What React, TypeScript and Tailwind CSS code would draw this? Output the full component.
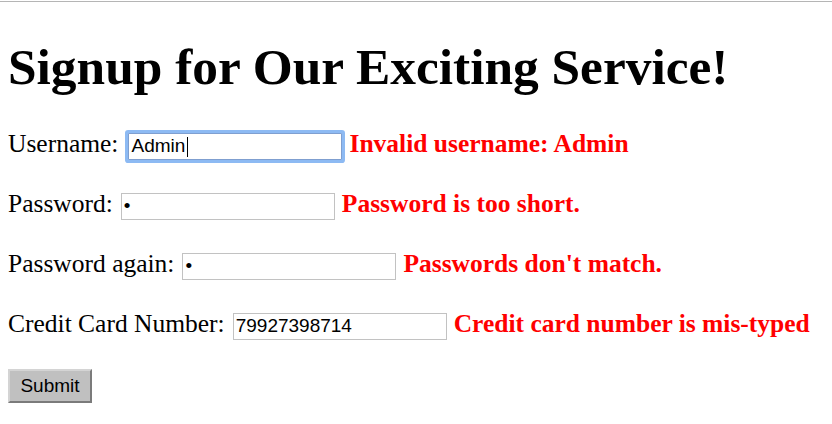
const serif = { fontFamily: '"Liberation Serif", "Times New Roman", serif' };

function Field({ label, value, type = 'text', error, focused = false }: {
  label: string;
  value: string;
  type?: string;
  error: string;
  focused?: boolean;
}) {
  return (
    <div className="flex items-baseline h-[60px] text-[25.5px] leading-[29px]">
      <span>{label}</span>
      <span className={'relative inline-flex ' + (focused ? 'ml-[10px]' : 'ml-[8px]')}>
        <input
          type={type}
          defaultValue={value}
          readOnly
          className={
            'w-[214px] h-[27px] px-[2px] bg-white text-black text-[19px] leading-[21px] outline-none font-["Liberation_Sans",Arial,sans-serif] ' +
            (focused
              ? 'border border-[#7f9fd0] rounded-[1px] shadow-[0_0_0_3px_#8dbaf3]'
              : 'border border-[#c2c2c2]')
          }
        />
        {focused && <span className="absolute left-[59px] top-[4px] h-[20px] w-px bg-black" />}
      </span>
      <span className="ml-[7px] font-bold text-[#ff0000]">{error}</span>
    </div>
  );
}

export default function App() {
  return (
    <div className="w-[832px] h-[424px] bg-white text-black overflow-hidden" style={serif}>
      <div className="mt-px h-px bg-[#b5b5b5]" />
      <div className="px-[8px]">
        <h1 className="mt-[36px] text-[51.4px] leading-[57px] font-bold">Signup for Our Exciting Service!</h1>
        <div className="mt-[34px]">
          <Field label="Username:" value="Admin" error="Invalid username: Admin" focused />
          <Field label="Password:" value="•" error="Password is too short." />
          <Field label="Password again:" value="•" error="Passwords don't match." />
          <Field label="Credit Card Number:" value="79927398714" error="Credit card number is mis-typed" />
        </div>
        <button className="w-[84px] h-[34px] bg-[#c0c0c0] border-[2px] border-t-[#d4d4d4] border-l-[#d4d4d4] border-r-[#7b7b7b] border-b-[#7b7b7b] text-[19px] leading-[22px] text-black font-['Liberation_Sans',Arial,sans-serif]">
          Submit
        </button>
      </div>
    </div>
  );
}
